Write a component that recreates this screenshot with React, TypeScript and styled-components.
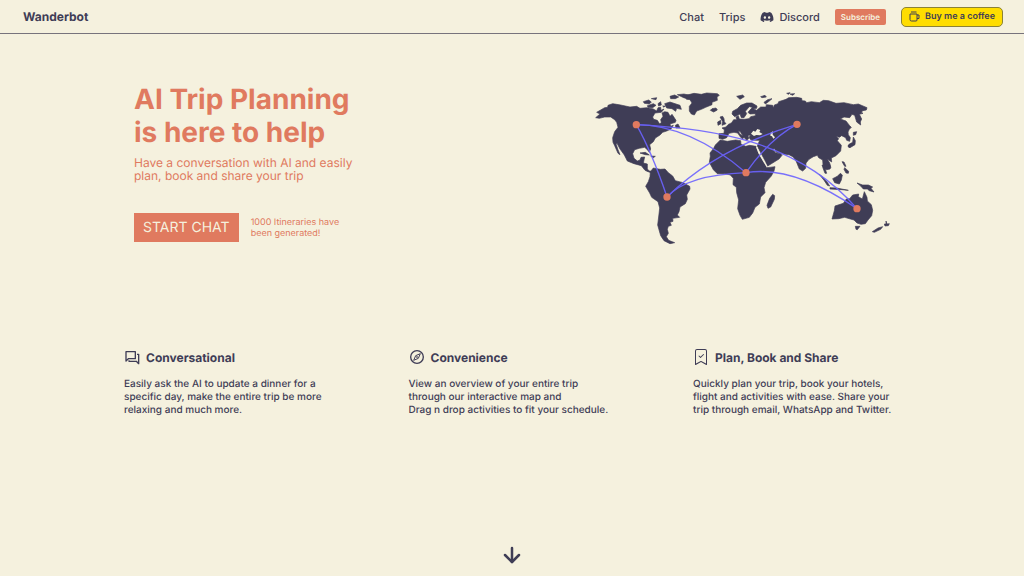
import React from 'react';
import styled, { createGlobalStyle } from 'styled-components';
import { FaDiscord } from 'react-icons/fa';
import { BsBookmarkCheck } from 'react-icons/bs';
import { ArrowDown } from 'lucide-react';

const color = {
  cream: '#f5f1de',
  ink: '#3f3d56',
  coral: '#e07a5f',
  line: '#6c63ff',
  yellow: '#ffdd00',
};

const GlobalStyle = createGlobalStyle`
  * { box-sizing: border-box; }
  body {
    margin: 0;
    background: ${color.cream};
    color: ${color.ink};
    font-family: Inter, "Liberation Sans", sans-serif;
    text-rendering: geometricPrecision;
  }
  h1, h2, p { margin: 0; }
  a { color: inherit; text-decoration: none; }
  button { font-family: inherit; text-rendering: inherit; cursor: pointer; }
  svg { display: block; flex-shrink: 0; }
`;

const Page = styled.div`
  min-height: 100vh;
  display: flex;
  flex-direction: column;
`;

const Header = styled.header`
  display: flex;
  align-items: center;
  justify-content: space-between;
  height: 34px;
  padding: 0 21px 0 23px;
  border-bottom: 1px solid #77737c;
`;

const Brand = styled.a`
  font-size: 12px;
  font-weight: 700;
  line-height: 16px;
`;

const Nav = styled.nav`
  display: flex;
  align-items: center;
  gap: 15px;
`;

const NavLink = styled.a`
  display: flex;
  align-items: center;
  gap: 5px;
  font-size: 11px;
  font-weight: 500;
  line-height: 16px;
`;

const Subscribe = styled.button`
  height: 16px;
  padding: 0 6px;
  border: 0;
  border-radius: 2px;
  background: ${color.coral};
  color: ${color.cream};
  font-size: 8px;
  font-weight: 600;
  line-height: 16px;
`;

const Coffee = styled.a`
  display: flex;
  align-items: center;
  gap: 5px;
  height: 20px;
  padding: 0 7px;
  border: 1px solid #8b8236;
  border-radius: 5px;
  background: ${color.yellow};
  font-size: 9px;
  font-weight: 600;
`;

const Main = styled.main`
  flex: 1;
  display: flex;
  flex-direction: column;
  width: 100%;
  max-width: 776px;
  margin: 0 auto;
`;

const Hero = styled.section`
  display: flex;
  justify-content: space-between;
  align-items: flex-start;
  padding: 49px 10px 0;
`;

const Title = styled.h1`
  color: ${color.coral};
  font-size: 28px;
  font-weight: 700;
  line-height: 33px;
`;

const Lead = styled.p`
  margin-top: 7px;
  color: ${color.coral};
  font-size: 12px;
  line-height: 13px;
`;

const Action = styled.div`
  display: flex;
  align-items: center;
  gap: 12px;
  margin-top: 31px;
`;

const Start = styled.button`
  height: 29px;
  padding: 0 9px;
  border: 0;
  background: ${color.coral};
  color: ${color.cream};
  font-size: 14px;
  line-height: 29px;
`;

const Count = styled.p`
  color: ${color.coral};
  font-size: 9px;
  line-height: 11px;
`;

const Map = styled.svg`
  width: 300px;
  height: 165px;
  margin-top: 2px;
`;

const Features = styled.section`
  display: flex;
  justify-content: space-between;
  margin-top: 98px;
`;

const Feature = styled.article`
  width: 207px;
  white-space: nowrap;
`;

const FeatureTitle = styled.h2`
  display: flex;
  align-items: center;
  gap: 6px;
  height: 18px;
  font-size: 12px;
  font-weight: 700;
`;

const FeatureText = styled.p`
  margin-top: 12px;
  font-size: 10px;
  font-weight: 500;
  line-height: 13px;
`;

const Scroll = styled.a`
  align-self: center;
  margin-top: auto;
  padding-bottom: 9px;
`;

const stops = [[139, 119], [621, 118], [231, 336], [468, 263], [801, 371]];

const routes = [
  'M139 119Q185 200 231 336',
  'M139 119Q300 120 468 263',
  'M139 119C350 130 620 160 801 371',
  'M231 336Q380 190 621 118',
  'M231 336Q290 270 468 263',
  'M468 263Q540 160 621 118',
  'M468 263Q610 240 801 371',
];

const land = [
  // North America and the Arctic islands
  'M17 98L30 87 20 82 44 68 53 67 54 61 68 56 80 58 92 60 120 66 140 64 150 70 172 68 190 72 200 78 204 68 212 67 213 76 222 72 214 82 195 84 188 96 191 103 202 106 209 117 214 112 212 104 219 94 216 84 224 80 234 82 240 94 246 88 258 106 256 112 240 117 242 124 250 121 243 132 230 138 218 142 210 150 196 159 190 170 179 179 182 192 178 202 172 194 164 187 148 190 134 194 128 206 132 220 142 228 150 225 153 217 164 216 160 234 172 237 172 252 178 258 190 260 187 264 174 260 165 256 154 242 132 236 112 228 103 210 90 192 81 175 78 176 84 194 90 209 84 205 74 182 69 172 68 158 74 140 84 127 80 112 74 104 62 96 44 96 28 100Z',
  'M160 50L176 45 184 51 178 57 163 55ZM172 62L190 56 198 61 188 68 174 67ZM184 41L200 38 198 44ZM204 56L212 50 214 60 206 63ZM224 56L240 51 258 57 270 61 274 73 260 70 257 79 246 71 230 69ZM218 63L226 63 222 67ZM240 34L254 30 266 36 256 41 242 41ZM262 29L282 27 299 31 283 39ZM256 121L264 117 270 128 258 129ZM150 204L166 202 178 210 166 209ZM182 213L196 214 190 218Z',
  // Greenland and Iceland
  'M278 33L300 28 312 25 334 28 350 24 382 26 388 31 381 36 382 46 366 52 366 59 347 67 334 73 320 78 313 90 304 87 298 78 298 64 306 54 300 44 290 43ZM361 76L366 71 378 69 382 75 371 81Z',
  // British Isles
  'M383 111L392 106 393 116 384 121ZM390 96L398 94 402 101 403 110 408 116 396 121 398 110Z',
  // Eurasia
  'M387 146L402 145 403 134 396 129 408 126 414 119 425 113 431 104 440 104 438 96 445 92 448 102 462 103 477 101 482 95 496 92 496 86 480 87 474 82 487 67 478 65 466 79 470 86 462 98 454 98 450 87 434 95 426 87 428 79 442 71 452 61 470 54 486 54 501 63 500 70 490 71 500 76 512 66 528 66 529 59 548 61 550 69 553 60 564 56 566 50 588 43 596 38 620 37 635 40 636 47 646 48 650 53 664 50 688 53 700 46 716 47 738 55 762 53 790 59 805 57 831 68 829 75 818 77 814 82 819 85 808 88 815 102 811 111 812 120 800 111 794 91 786 88 779 98 762 96 751 102 768 108 779 122 784 127 778 133 774 141 775 149 781 158 779 169 770 166 767 158 755 152 748 157 738 154 746 161 742 167 754 181 752 198 738 212 724 219 725 231 712 222 719 234 722 244 713 249 699 239 698 225 686 218 682 211 670 215 657 223 648 234 647 250 638 258 628 252 619 230 610 216 597 209 578 207 558 201 554 191 548 192 556 203 572 206 576 211 567 222 538 240 532 244 526 229 508 195 502 183 509 166 496 166 482 164 477 157 482 151 474 151 476 161 470 166 461 156 451 140 445 137 449 146 462 155 458 162 452 157 443 144 432 142 417 145 410 158 398 163 387 160Z',
  'M440 34L458 30 463 35 450 43ZM512 35L525 31 529 36 516 38ZM522 52L533 44 546 41 537 49 526 57ZM590 25L600 23 596 28ZM600 27L614 26 608 31Z',
  // Africa and Madagascar
  'M376 180L391 165 412 169 437 165 452 167 453 178 467 184 479 181 498 184 504 202 518 226 531 248 555 245 552 258 544 273 527 292 522 308 525 323 512 336 508 357 495 367 488 384 478 397 457 403 450 391 443 371 446 345 440 323 439 307 429 299 430 280 421 270 404 266 382 266 370 254 358 232 361 214 360 204 371 190ZM548 328L554 332 553 343 542 366 534 370 531 361 539 340Z',
  // South America
  'M181 260L190 249 200 251 211 253 225 252 235 263 248 273 256 287 279 293 299 304 300 312 290 330 292 343 286 356 270 366 267 380 262 390 269 397 248 400 249 409 240 412 244 421 235 424 232 433 235 445 229 455 236 466 254 473 240 476 222 467 212 452 203 420 207 387 209 369 204 350 185 337 179 324 167 304 175 290 180 275Z',
  // East Asian islands
  'M790 142L800 140 797 149 790 151ZM790 156L796 167 795 179 780 188 774 185 777 178 788 172ZM774 180L781 183 778 188ZM756 230L762 231 768 244 764 244ZM764 248L776 259 775 265 768 264 762 253ZM696 240L716 240 723 246 720 252 710 254 706 253 710 265 705 265 700 252ZM688 268L698 276 712 292 719 303 712 301 703 287ZM728 281L742 274 751 265 757 270 754 285 748 297 734 293ZM720 308L740 309 775 316 755 314 720 312ZM801 294L818 300 835 300 848 306 843 310 852 321 838 317 832 312 820 312 812 303Z',
  // Australia, Tasmania and New Zealand
  'M726 402L733 377 735 363 760 355 769 342 779 341 788 330 806 327 805 335 817 342 823 320 831 337 832 348 844 359 848 376 845 392 834 405 826 416 813 418 801 414 792 405 781 402 764 397 746 401ZM796 424L810 424 802 434 798 433ZM847 440L864 429 878 425 872 433 853 442ZM883 417L888 417 888 408 891 417 898 416 895 422 885 423Z',
];

const seas = 'M483 146L490 137 496 140 502 132 511 135 508 141 518 147 510 151 499 150 492 153ZM542 143L549 139 548 149 555 157 550 161 546 154 541 152Z';

function WorldMap() {
  return (
    <Map viewBox="0 0 900 495" role="img" aria-label="World map with travel routes">
      <g fill={color.ink} stroke={color.ink} strokeWidth="2" strokeLinejoin="round">
        {land.map((d) => <path key={d} d={d} />)}
      </g>
      <path d={seas} fill={color.cream} />
      <path d="M500 186L508 206 522 230 532 246" fill="none" stroke={color.cream} strokeWidth="4" />
      <g fill="none" stroke={color.line} strokeWidth="4" opacity="0.9">
        {routes.map((d) => <path key={d} d={d} />)}
      </g>
      <g fill={color.coral}>
        {stops.map(([x, y]) => <circle key={x} cx={x} cy={y} r="11" />)}
      </g>
    </Map>
  );
}

function Mug() {
  return (
    <svg width="11" height="11" viewBox="0 0 22 22" fill="none" stroke={color.ink} strokeWidth="2" strokeLinejoin="round" aria-hidden="true">
      <path d="M4 2H15M2 6H16V18Q16 20 14 20H5Q2 20 2 17ZM16 8H20V15H16" />
    </svg>
  );
}

function ChatBubbles() {
  return (
    <svg width="16" height="16" viewBox="0 0 48 48" fill="none" stroke={color.ink} strokeWidth="4" strokeLinejoin="round" aria-hidden="true">
      <path d="M6 8H34V29H13L6 36ZM39 16H44V44L37 37H15V34" />
    </svg>
  );
}

function Compass() {
  return (
    <svg width="16" height="16" viewBox="0 0 48 48" fill="none" stroke={color.ink} strokeWidth="4" strokeLinejoin="round" aria-hidden="true">
      <circle cx="24" cy="24" r="19" />
      <path d="M34 14L28 28 14 34 20 20Z" strokeWidth="3" />
      <circle cx="24" cy="24" r="2" strokeWidth="2" />
    </svg>
  );
}

const features = [
  {
    icon: <ChatBubbles />,
    title: 'Conversational',
    lines: ['Easily ask the AI to update a dinner for a', 'specific day, make the entire trip be more', 'relaxing and much more.'],
  },
  {
    icon: <Compass />,
    title: 'Convenience',
    lines: ['View an overview of your entire trip', 'through our interactive map and', 'Drag n drop activities to fit your schedule.'],
  },
  {
    icon: <BsBookmarkCheck size={16} />,
    title: 'Plan, Book and Share',
    lines: ['Quickly plan your trip, book your hotels,', 'flight and activities with ease. Share your', 'trip through email, WhatsApp and Twitter.'],
  },
];

function Lines({ items }: { items: string[] }) {
  return (
    <>
      {items.map((line, i) => (
        <React.Fragment key={line}>
          {i > 0 && <br />}
          {line}
        </React.Fragment>
      ))}
    </>
  );
}

export default function App() {
  return (
    <Page>
      <GlobalStyle />
      <Header>
        <Brand href="#">Wanderbot</Brand>
        <Nav>
          <NavLink href="#chat">Chat</NavLink>
          <NavLink href="#trips">Trips</NavLink>
          <NavLink href="#discord"><FaDiscord size={14} />Discord</NavLink>
          <Subscribe type="button">Subscribe</Subscribe>
          <Coffee href="#coffee"><Mug />Buy me a coffee</Coffee>
        </Nav>
      </Header>
      <Main>
        <Hero>
          <div>
            <Title><Lines items={['AI Trip Planning', 'is here to help']} /></Title>
            <Lead><Lines items={['Have a conversation with AI and easily', 'plan, book and share your trip']} /></Lead>
            <Action>
              <Start type="button">START CHAT</Start>
              <Count><Lines items={['1000 Itineraries have', 'been generated!']} /></Count>
            </Action>
          </div>
          <WorldMap />
        </Hero>
        <Features>
          {features.map((f) => (
            <Feature key={f.title}>
              <FeatureTitle>{f.icon}{f.title}</FeatureTitle>
              <FeatureText><Lines items={f.lines} /></FeatureText>
            </Feature>
          ))}
        </Features>
        <Scroll href="#more" aria-label="Scroll down"><ArrowDown size={24} strokeWidth={2.5} /></Scroll>
      </Main>
    </Page>
  );
}
